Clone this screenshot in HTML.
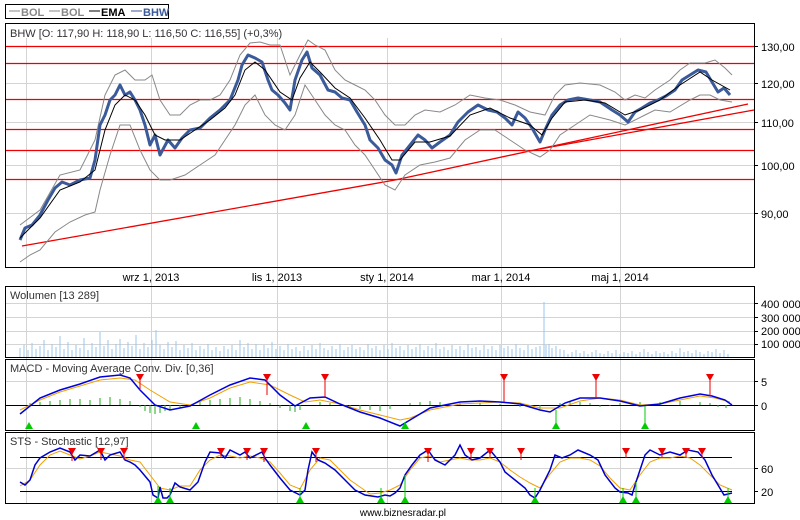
<!DOCTYPE html>
<html><head><meta charset="utf-8"><style>
body{margin:0;background:#fff;width:800px;height:520px;overflow:hidden}
svg{display:block;font-family:"Liberation Sans",sans-serif}
</style></head><body>
<svg width="800" height="520" viewBox="0 0 800 520" xmlns="http://www.w3.org/2000/svg">
<rect width="800" height="520" fill="#fff"/>
<!-- legend -->
<rect x="5.5" y="4.5" width="163" height="14" fill="#fff" stroke="#000"/>
<line x1="9" y1="11" x2="20" y2="11" stroke="#888"/><text x="21" y="16" font-size="11" font-weight="bold" fill="#888">BOL</text>
<line x1="49" y1="11" x2="60" y2="11" stroke="#888"/><text x="61" y="16" font-size="11" font-weight="bold" fill="#888">BOL</text>
<line x1="89" y1="11" x2="100" y2="11" stroke="#000"/><text x="101" y="16" font-size="11" font-weight="bold" fill="#000">EMA</text>
<line x1="131" y1="11" x2="142" y2="11" stroke="#3a5a9a"/><text x="143" y="16" font-size="11" font-weight="bold" fill="#3a5a9a">BHW</text>

<!-- main panel -->
<g stroke="#d4d4d4" stroke-width="1">
<line x1="6" y1="83.5" x2="754" y2="83.5"/><line x1="6" y1="122.5" x2="754" y2="122.5"/><line x1="6" y1="165.5" x2="754" y2="165.5"/><line x1="6" y1="213.5" x2="754" y2="213.5"/>
<line x1="26.5" y1="38" x2="26.5" y2="503"/><line x1="151.5" y1="38" x2="151.5" y2="503"/><line x1="277.5" y1="38" x2="277.5" y2="503"/><line x1="387.5" y1="38" x2="387.5" y2="503"/><line x1="501.5" y1="38" x2="501.5" y2="503"/><line x1="620.5" y1="38" x2="620.5" y2="503"/>
</g>
<g stroke="#e00" stroke-width="1.3">
<line x1="6" y1="46.5" x2="754" y2="46.5"/><line x1="6" y1="63.5" x2="754" y2="63.5"/><line x1="6" y1="99.5" x2="754" y2="99.5"/><line x1="6" y1="129.5" x2="754" y2="129.5"/><line x1="6" y1="150.5" x2="754" y2="150.5"/><line x1="6" y1="179.5" x2="754" y2="179.5"/>
<line x1="22" y1="246" x2="395" y2="180"/><line x1="395" y1="180" x2="748" y2="104"/><line x1="540" y1="149" x2="754" y2="110"/>
</g>
<!-- bollinger -->
<polyline fill="none" stroke="#888" stroke-width="1" points="20,225 40,210 60,175 80,170 95,140 105,95 115,75 125,70 135,80 145,80 152,75 160,100 170,115 180,115 190,105 200,100 210,100 220,95 230,80 240,55 250,43 260,42 270,45 280,45 290,75 300,55 308,40 315,45 325,50 335,70 345,80 355,85 365,90 375,100 385,115 395,125 405,125 415,115 425,110 440,112 455,105 470,95 485,98 500,100 515,105 530,112 545,115 555,95 565,85 580,83 600,85 615,92 625,100 635,95 645,98 655,90 670,80 680,70 690,63 705,63 715,60 725,68 732,75"/>
<polyline fill="none" stroke="#888" stroke-width="1" points="20,262 30,255 40,250 55,232 70,222 85,215 95,212 100,190 110,155 120,125 130,125 140,150 150,170 160,180 170,180 185,175 200,165 215,155 225,140 235,125 245,105 255,95 265,115 275,125 285,130 295,115 305,85 315,100 325,115 335,125 345,130 355,145 365,155 375,170 385,185 395,190 405,175 420,165 435,162 450,158 465,140 480,130 495,130 510,140 525,150 540,157 550,150 560,135 575,125 590,115 610,120 625,125 635,120 645,115 655,110 670,112 690,100 700,95 710,95 720,100 732,102"/>
<!-- price -->
<polyline fill="none" stroke="#3a5a9a" stroke-width="3" stroke-linejoin="round" points="20,240 25,228 32,225 40,215 48,200 55,188 62,182 70,185 80,180 90,178 95,160 100,125 105,115 110,100 115,95 120,85 125,95 130,92 135,100 140,110 145,125 150,145 155,135 160,155 168,140 175,148 182,138 190,130 200,128 210,118 220,110 230,100 238,80 242,65 248,55 255,58 262,62 268,80 272,90 278,95 285,103 290,110 295,80 302,60 307,52 312,68 320,75 328,90 335,92 342,98 350,100 357,112 365,125 370,140 378,148 385,160 392,165 396,173 402,155 410,145 418,135 425,140 432,148 440,142 450,135 458,122 468,112 478,105 488,110 497,112 505,118 512,125 518,112 525,118 532,128 540,142 545,130 552,115 560,105 568,100 578,98 590,100 600,102 612,110 620,115 628,122 635,112 642,108 650,103 658,100 666,96 675,90 682,80 690,75 698,70 706,72 712,82 718,92 724,88 730,95"/>
<polyline fill="none" stroke="#000" stroke-width="1" points="20,238 40,218 60,190 80,182 95,170 105,130 115,105 125,95 135,100 145,115 155,135 165,140 180,140 195,130 210,120 225,108 235,95 245,70 255,62 265,70 280,92 292,100 300,78 310,62 320,72 335,88 350,98 365,118 380,140 392,160 400,160 415,142 430,142 450,136 470,115 490,108 510,118 530,125 542,135 552,118 565,102 585,100 605,103 625,115 640,110 660,100 680,85 700,72 712,80 730,90"/>
<rect x="5.5" y="23.5" width="749" height="244" fill="none" stroke="#000"/>
<text x="10" y="37" font-size="11" fill="#333">BHW [O: 117,90  H: 118,90  L: 116,50  C: 116,55] (+0,3%)</text>
<g font-size="11" fill="#000">
<line x1="754" y1="46.5" x2="758" y2="46.5" stroke="#000"/><text x="761" y="51">130,00</text>
<line x1="754" y1="83.5" x2="758" y2="83.5" stroke="#000"/><text x="761" y="88">120,00</text>
<line x1="754" y1="122.5" x2="758" y2="122.5" stroke="#000"/><text x="761" y="127">110,00</text>
<line x1="754" y1="165.5" x2="758" y2="165.5" stroke="#000"/><text x="761" y="170">100,00</text>
<line x1="754" y1="213.5" x2="758" y2="213.5" stroke="#000"/><text x="761" y="218">90,00</text>
<text x="151" y="281" text-anchor="middle">wrz 1, 2013</text>
<text x="277" y="281" text-anchor="middle">lis 1, 2013</text>
<text x="387" y="281" text-anchor="middle">sty 1, 2014</text>
<text x="501" y="281" text-anchor="middle">mar 1, 2014</text>
<text x="620" y="281" text-anchor="middle">maj 1, 2014</text>
</g>

<!-- volume -->
<g stroke="#d4d4d4"><line x1="6" y1="303.5" x2="754" y2="303.5"/><line x1="6" y1="317.5" x2="754" y2="317.5"/><line x1="6" y1="331.5" x2="754" y2="331.5"/><line x1="6" y1="344.5" x2="754" y2="344.5"/></g>
<path stroke="#9cc4ee" stroke-width="1" d="M20 357V348M24 357V345M28 357V350M32 357V343M36 357V349M40 357V346M44 357V340M48 357V350M52 357V344M56 357V347M60 357V336M64 357V349M68 357V342M72 357V350M76 357V345M80 357V348M84 357V338M88 357V350M92 357V343M96 357V347M100 357V332M104 357V346M108 357V340M112 357V349M116 357V344M120 357V339M124 357V348M128 357V342M132 357V346M136 357V335M140 357V349M144 357V343M148 357V347M152 357V340M156 357V330M160 357V345M164 357V349M168 357V342M172 357V347M176 357V341M180 357V350M184 357V345M188 357V348M192 357V343M196 357V350M200 357V346M204 357V349M208 357V344M212 357V350M216 357V347M220 357V351M224 357V346M228 357V349M232 357V345M236 357V350M240 357V340M244 357V347M248 357V343M252 357V349M256 357V344M260 357V350M264 357V345M268 357V348M272 357V342M276 357V349M280 357V346M284 357V350M288 357V344M292 357V349M296 357V347M300 357V351M304 357V346M308 357V350M312 357V345M316 357V349M320 357V343M324 357V348M328 357V350M332 357V346M336 357V349M340 357V344M344 357V350M348 357V347M352 357V345M356 357V349M360 357V347M364 357V350M368 357V344M372 357V348M376 357V346M380 357V350M384 357V345M388 357V349M392 357V343M396 357V348M400 357V346M404 357V350M408 357V345M412 357V349M416 357V347M420 357V344M424 357V350M428 357V346M432 357V348M436 357V343M440 357V349M444 357V347M448 357V350M452 357V345M456 357V349M460 357V346M464 357V350M468 357V344M472 357V348M476 357V347M480 357V350M484 357V345M488 357V349M492 357V346M496 357V350M500 357V345M504 357V348M508 357V346M512 357V349M516 357V344M520 357V348M524 357V350M528 357V345M532 357V349M536 357V347M540 357V346M544 357V302M546 357V345M549 357V344M552 357V348M556 357V346M560 357V349M564 357V350M568 357V354M572 357V352M576 357V350M580 357V353M584 357V351M588 357V354M592 357V352M596 357V350M600 357V353M604 357V354M608 357V351M612 357V353M616 357V350M620 357V354M624 357V352M628 357V353M632 357V351M636 357V354M640 357V352M644 357V349M648 357V352M652 357V354M656 357V351M660 357V353M664 357V352M668 357V354M672 357V351M676 357V353M680 357V348M684 357V352M688 357V351M692 357V353M696 357V350M700 357V352M704 357V354M708 357V351M712 357V352M716 357V349M720 357V353M724 357V350M728 357V354"/>
<rect x="5.5" y="286.5" width="749" height="71" fill="none" stroke="#000"/>
<text x="10" y="299" font-size="11" fill="#333">Wolumen [13 289]</text>
<g font-size="11" fill="#000">
<line x1="754" y1="303.5" x2="758" y2="303.5" stroke="#000"/><text x="761" y="308">400 000</text>
<line x1="754" y1="317.5" x2="758" y2="317.5" stroke="#000"/><text x="761" y="322">300 000</text>
<line x1="754" y1="331.5" x2="758" y2="331.5" stroke="#000"/><text x="761" y="335">200 000</text>
<line x1="754" y1="344.5" x2="758" y2="344.5" stroke="#000"/><text x="761" y="348">100 000</text>
</g>

<!-- MACD -->
<line x1="6" y1="381.5" x2="754" y2="381.5" stroke="#d4d4d4"/>
<line x1="6" y1="405.5" x2="754" y2="405.5" stroke="#000"/>
<path stroke="#2a2" d="M30 405v-2M40 405v-3M50 405v-4M60 405v-5M70 405v-6M80 405v-6M90 405v-5M100 405v-7M110 405v-8M120 405v-6M130 405v-4M140 405v2M145 405v6M150 405v8M155 405v9M160 405v8M165 405v6M170 405v5M180 405v3M200 405v-3M210 405v-5M220 405v-6M230 405v-7M240 405v-8M250 405v-6M260 405v-4M270 405v-2M280 405v3M290 405v6M295 405v7M300 405v5M320 405v-3M330 405v-2M350 405v2M360 405v4M370 405v5M380 405v6M390 405v4M410 405v-2M420 405v-3M430 405v-4M440 405v-3M460 405v-2M480 405v-2M500 405v-1M520 405v2M530 405v3M540 405v4M560 405v-2M570 405v-3M580 405v-3M590 405v-2M600 405v2M610 405v1M620 405v-2M640 405v-3M660 405v-3M680 405v-4M700 405v-3M710 405v-2M718 405v2M726 405v3"/>
<polyline fill="none" stroke="#f0a000" stroke-width="1" points="20,410 40,400 60,392 80,386 100,380 120,378 135,380 150,390 170,402 190,405 210,398 230,388 250,382 270,385 290,395 305,402 320,400 340,404 360,410 380,415 400,420 410,418 430,410 460,404 480,403 500,402 520,403 540,408 560,408 580,401 600,398 620,400 640,405 660,404 680,400 700,396 715,398 730,402"/>
<polyline fill="none" stroke="#0000dd" stroke-width="1.5" points="20,414 40,398 60,390 80,384 100,377 120,375 130,378 140,390 155,405 170,410 190,406 210,395 230,385 250,378 265,380 280,395 295,406 310,398 325,397 340,404 360,412 380,418 400,426 410,420 430,408 460,402 480,401 500,402 520,404 540,410 550,412 565,403 580,398 600,398 620,401 640,406 660,404 680,398 700,394 712,396 725,400 732,405"/>
<g fill="#e00" stroke="#e00"><line x1="267" y1="380" x2="267" y2="395"/><line x1="325" y1="380" x2="325" y2="397"/><line x1="504" y1="378" x2="504" y2="402"/><line x1="596" y1="378" x2="596" y2="398"/><line x1="710" y1="378" x2="710" y2="396"/><line x1="140" y1="380" x2="140" y2="390"/></g>
<g fill="#e00"><path d="M263 374h8l-4 7z"/><path d="M321 374h8l-4 7z"/><path d="M500 374h8l-4 7z"/><path d="M592 374h8l-4 7z"/><path d="M706 374h8l-4 7z"/><path d="M136 374h8l-4 7z"/></g>
<g stroke="#0c0"><line x1="556" y1="410" x2="556" y2="428"/><line x1="645" y1="406" x2="645" y2="428"/><line x1="405" y1="422" x2="405" y2="428"/></g>
<g fill="#0c0"><path d="M25 429h8l-4-7z"/><path d="M192 429h8l-4-7z"/><path d="M302 429h8l-4-7z"/><path d="M401 429h8l-4-7z"/><path d="M552 429h8l-4-7z"/><path d="M641 429h8l-4-7z"/></g>
<rect x="5.5" y="359.5" width="749" height="71" fill="none" stroke="#000"/>
<text x="10" y="372" font-size="11" fill="#333">MACD - Moving Average Conv. Div. [0,36]</text>
<g font-size="11" fill="#000">
<line x1="754" y1="381.5" x2="758" y2="381.5" stroke="#000"/><text x="761" y="386">5</text>
<line x1="754" y1="405.5" x2="758" y2="405.5" stroke="#000"/><text x="761" y="410">0</text>
</g>

<!-- STS -->
<line x1="6" y1="468.5" x2="754" y2="468.5" stroke="#d4d4d4"/>
<line x1="20" y1="457.5" x2="732" y2="457.5" stroke="#000"/>
<line x1="20" y1="491.5" x2="732" y2="491.5" stroke="#000"/>
<polyline fill="none" stroke="#f0a000" stroke-width="1" points="20,486 30,480 40,465 50,455 60,451 70,455 80,459 90,456 100,452 110,454 120,456 130,460 140,462 150,475 160,488 170,490 180,486 190,486 200,470 210,460 220,455 230,456 240,458 250,456 260,458 270,462 280,473 290,485 300,489 310,470 320,458 330,460 340,470 350,480 360,487 370,494 380,493 390,490 400,485 410,470 420,458 430,456 440,462 450,460 460,458 470,460 480,460 490,458 500,462 510,470 520,477 530,483 540,488 550,474 560,462 570,458 580,458 590,460 600,466 610,478 620,488 630,490 640,475 650,462 660,458 670,458 680,456 690,458 700,465 710,475 720,485 732,490"/>
<polyline fill="none" stroke="#0000cc" stroke-width="1.5" points="20,482 25,485 30,480 35,465 40,458 50,452 60,448 70,452 75,460 80,455 90,456 100,450 105,460 110,455 120,452 125,460 130,462 135,465 140,470 150,482 153,495 158,498 160,487 163,498 167,498 170,495 175,483 180,487 190,490 198,482 205,462 210,452 220,453 225,458 230,450 240,455 245,452 250,458 262,452 265,458 270,465 280,478 290,490 300,495 305,490 308,470 312,452 318,460 325,463 335,470 345,480 355,490 365,495 378,497 385,495 390,496 395,493 400,488 405,475 412,465 420,455 428,450 435,460 445,465 455,455 460,445 465,455 472,460 480,458 490,450 500,462 505,472 515,480 525,488 530,495 535,498 540,490 550,470 555,455 562,458 570,455 578,450 590,455 598,460 605,475 615,488 620,492 628,493 632,495 636,482 640,470 645,455 650,450 660,455 670,452 680,455 688,450 698,452 705,460 712,475 718,485 724,495 732,493"/>
<g stroke="#e00"><line x1="72" y1="452" x2="72" y2="461"/><line x1="101" y1="452" x2="101" y2="460"/><line x1="124" y1="452" x2="124" y2="460"/><line x1="221" y1="452" x2="221" y2="458"/><line x1="247" y1="452" x2="247" y2="460"/><line x1="264" y1="452" x2="264" y2="462"/><line x1="316" y1="452" x2="316" y2="462"/><line x1="428" y1="452" x2="428" y2="462"/><line x1="471" y1="452" x2="471" y2="460"/><line x1="490" y1="452" x2="490" y2="458"/><line x1="521" y1="452" x2="521" y2="460"/><line x1="626" y1="452" x2="626" y2="458"/><line x1="662" y1="452" x2="662" y2="458"/><line x1="686" y1="452" x2="686" y2="458"/><line x1="702" y1="452" x2="702" y2="458"/></g>
<g fill="#e00"><path d="M68 448h8l-4 7z"/><path d="M97 448h8l-4 7z"/><path d="M120 448h8l-4 7z"/><path d="M217 448h8l-4 7z"/><path d="M243 448h8l-4 7z"/><path d="M260 448h8l-4 7z"/><path d="M312 448h8l-4 7z"/><path d="M424 448h8l-4 7z"/><path d="M467 448h8l-4 7z"/><path d="M486 448h8l-4 7z"/><path d="M517 448h8l-4 7z"/><path d="M622 448h8l-4 7z"/><path d="M658 448h8l-4 7z"/><path d="M682 448h8l-4 7z"/><path d="M698 448h8l-4 7z"/></g>
<g stroke="#0c0"><line x1="158" y1="486" x2="158" y2="498"/><line x1="170" y1="488" x2="170" y2="498"/><line x1="300" y1="488" x2="300" y2="498"/><line x1="381" y1="488" x2="381" y2="498"/><line x1="405" y1="475" x2="405" y2="498"/><line x1="535" y1="488" x2="535" y2="498"/><line x1="623" y1="488" x2="623" y2="498"/><line x1="636" y1="482" x2="636" y2="498"/><line x1="728" y1="488" x2="728" y2="498"/></g>
<g fill="#0c0"><path d="M154 503h8l-4-7z"/><path d="M166 503h8l-4-7z"/><path d="M296 503h8l-4-7z"/><path d="M377 503h8l-4-7z"/><path d="M401 503h8l-4-7z"/><path d="M531 503h8l-4-7z"/><path d="M619 503h8l-4-7z"/><path d="M632 503h8l-4-7z"/><path d="M724 503h8l-4-7z"/></g>
<rect x="5.5" y="432.5" width="749" height="71" fill="none" stroke="#000"/>
<text x="10" y="445" font-size="11" fill="#333">STS - Stochastic [12,97]</text>
<g font-size="11" fill="#000">
<line x1="754" y1="468.5" x2="758" y2="468.5" stroke="#000"/><text x="761" y="473">60</text>
<line x1="754" y1="491.5" x2="758" y2="491.5" stroke="#000"/><text x="761" y="496">20</text>
</g>
<text x="446" y="516" font-size="10" fill="#000" text-anchor="end">www.biznesradar.pl</text>
</svg>
</body></html>
